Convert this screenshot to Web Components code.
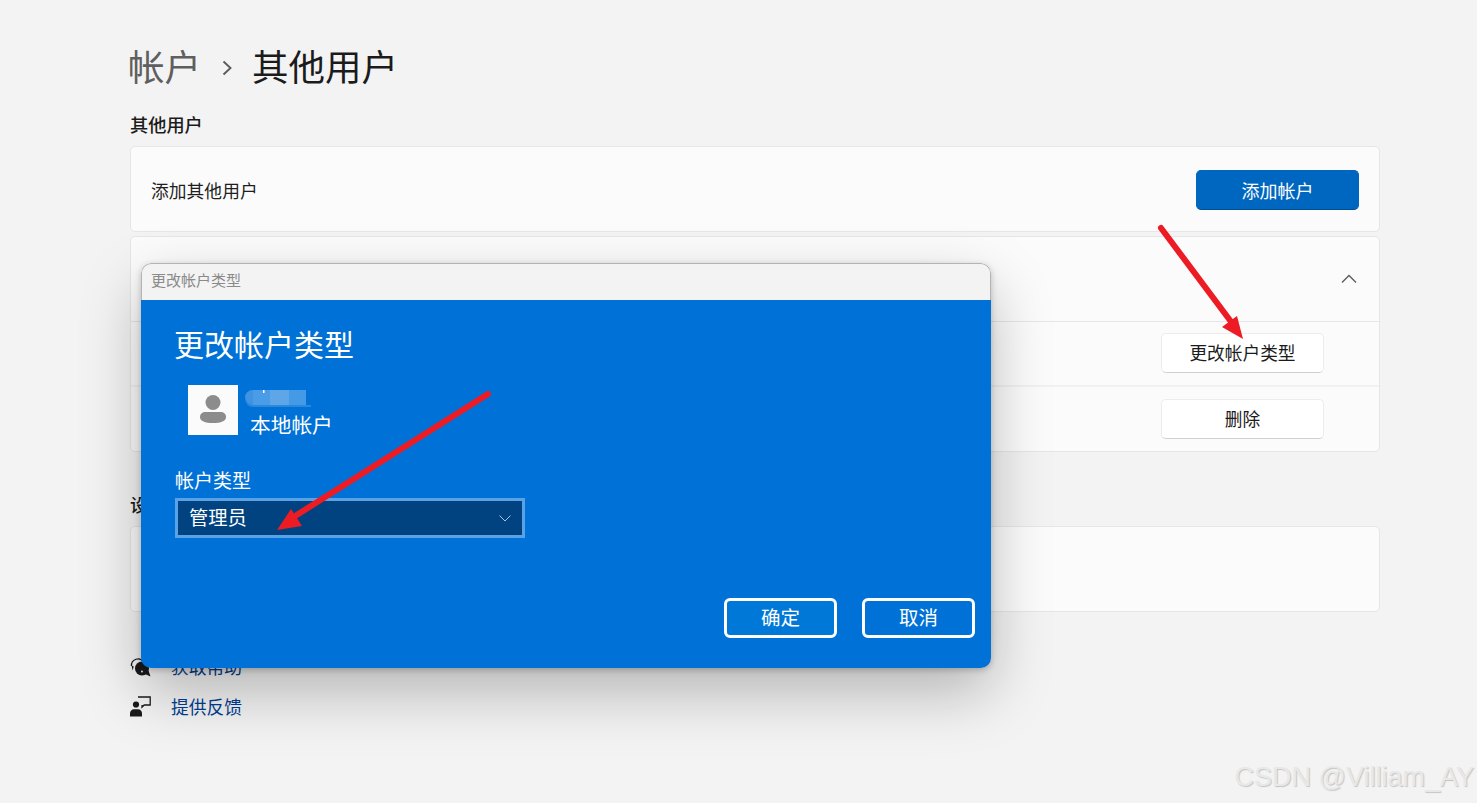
<!DOCTYPE html>
<html lang="zh-CN">
<head>
<meta charset="utf-8">
<title>其他用户</title>
<style>
    html, body { margin: 0; height: 100%; }
    body {
        background: #f3f3f3;
        color: #1b1b1b;
        font-family: "Noto Sans CJK SC", "Noto Sans", sans-serif;
        overflow: hidden;
    }
</style>
</head>
<body>
<settings-page>
    <page-crumb parent="帐户" current="其他用户"></page-crumb>
    <section-title>其他用户</section-title>
    <setting-card>
        <setting-row height="84" style="padding-top:2px">
            添加其他用户
            <win-button slot="action" kind="primary">添加帐户</win-button>
        </setting-row>
    </setting-card>
    <setting-card gap="4">
        <setting-row height="84">
            <chevron-up slot="action"></chevron-up>
        </setting-row>
        <setting-row height="64" line="1" style="padding-right:55px;padding-bottom:1px">
            <win-button slot="action">更改帐户类型</win-button>
        </setting-row>
        <setting-row height="66" line="2" style="padding-right:55px">
            <win-button slot="action">删除</win-button>
        </setting-row>
    </setting-card>
    <section-title top="39">设</section-title>
    <setting-card>
        <setting-row height="84"></setting-row>
    </setting-card>
    <help-links></help-links>
</settings-page>
<account-dialog></account-dialog>
<arrow-notes></arrow-notes>
<water-mark>CSDN @Villiam_AY</water-mark>

<script>
class SettingsPage extends HTMLElement {
    connectedCallback() {
        this.attachShadow({mode: 'open'}).innerHTML = `
        <style>
            :host {
                display: block;
                box-sizing: border-box;
                height: 803px;
                padding: 40px 97px 0 130px;
            }
        </style>
        <slot></slot>`;
    }
}

class PageCrumb extends HTMLElement {
    connectedCallback() {
        this.attachShadow({mode: 'open'}).innerHTML = `
        <style>
            :host {
                display: flex;
                align-items: center;
                height: 52px;
                font-size: 36.5px;
                line-height: 52px;
                margin-left: -2px;
            }
            .parent { color: #5f5f5f; }
            svg { margin: 3px 19px 0 21px; }
        </style>
        <span class="parent">${this.getAttribute('parent')}</span>
        <svg width="11" height="16" viewBox="0 0 11 16"><path d="M1.500 1.500L8.500 8l-7 6.500" fill="none" stroke="#5c5c5c" stroke-width="1.900"/></svg>
        <span>${this.getAttribute('current')}</span>`;
    }
}

class SectionTitle extends HTMLElement {
    connectedCallback() {
        const top = this.getAttribute('top') || 19;
        this.attachShadow({mode: 'open'}).innerHTML = `
        <style>
            :host {
                display: block;
                margin-top: ${top}px;
                margin-bottom: 9px;
                height: 26px;
                font-size: 18.2px;
                line-height: 26px;
                font-weight: 500;
            }
        </style>
        <slot></slot>`;
    }
}

class SettingCard extends HTMLElement {
    connectedCallback() {
        const gap = this.getAttribute('gap') || 0;
        this.attachShadow({mode: 'open'}).innerHTML = `
        <style>
            :host {
                display: block;
                margin-top: ${gap}px;
                background: #fbfbfb;
                border: 1px solid #e6e6e6;
                border-radius: 5px;
            }
        </style>
        <slot></slot>`;
    }
}

class SettingRow extends HTMLElement {
    connectedCallback() {
        const line = this.getAttribute('line');
        this.attachShadow({mode: 'open'}).innerHTML = `
        <style>
            :host {
                display: flex;
                align-items: center;
                justify-content: space-between;
                box-sizing: border-box;
                height: ${this.getAttribute('height')}px;
                padding: 0 20px;
                font-size: 17.8px;
                color: #1f1f1f;
                ${line ? `border-top: ${line}px solid ${line === '1' ? '#e6e6e6' : '#f1f1f1'};` : ''}
            }
        </style>
        <span><slot></slot></span>
        <slot name="action"></slot>`;
    }
}

class WinButton extends HTMLElement {
    connectedCallback() {
        const primary = this.getAttribute('kind') === 'primary';
        this.attachShadow({mode: 'open'}).innerHTML = `
        <style>
            :host {
                display: flex;
                align-items: center;
                justify-content: center;
                box-sizing: border-box;
                width: 163px;
                height: 40px;
                border-radius: 5px;
                font-size: ${primary ? '18px' : '17.7px'};
                padding-bottom: ${primary ? 0 : 2}px;
                border: 1px solid ${primary ? '#0067c0' : '#ececec'};
                border-bottom-color: ${primary ? '#004f93' : '#d0d0d0'};
                background: ${primary ? '#0067c0' : '#ffffff'};
                color: ${primary ? '#ffffff' : '#1b1b1b'};
            }
        </style>
        <slot></slot>`;
    }
}

class ChevronUp extends HTMLElement {
    connectedCallback() {
        this.attachShadow({mode: 'open'}).innerHTML = `
        <style>
            :host { display: block; width: 16px; height: 10px; margin-right: 2px; margin-bottom: 1px; }
            svg { display: block; }
        </style>
        <svg width="16" height="10" viewBox="0 0 16 10"><path d="M1 8.500l7-7 7 7" fill="none" stroke="#5a5a5a" stroke-width="1.300"/></svg>`;
    }
}

class HelpLinks extends HTMLElement {
    connectedCallback() {
        this.attachShadow({mode: 'open'}).innerHTML = `
        <style>
            :host {
                display: flex;
                flex-direction: column;
                gap: 10px;
                margin-top: 39px;
            }
            a {
                display: flex;
                align-items: center;
                gap: 20px;
                height: 30px;
                font-size: 17.8px;
                color: #003e92;
                text-decoration: none;
            }
            svg { flex: none; display: block; }
        </style>
        <a href="#help">
            <svg width="21" height="21" viewBox="0 0 21 21">
                <path d="M1.500 10a6.500 6.500 0 0 1 12-4" fill="none" stroke="#1a1a1a" stroke-width="1.300"/>
                <path d="M1.500 9.500l2.200 1-1 4z" fill="#1a1a1a"/>
                <circle cx="12" cy="12.500" r="7" fill="#1a1a1a"/>
                <path d="M15 18l5.500 2.500-2-6z" fill="#1a1a1a"/>
                <circle cx="12" cy="15.500" r=".9" fill="#fff"/>
            </svg>
            获取帮助
        </a>
        <a href="#feedback">
            <svg width="21" height="21" viewBox="0 0 21 21">
                <circle cx="6" cy="8.500" r="3.100" fill="#1a1a1a"/>
                <path d="M0 20.500v-3.300c0-2.200 1.800-4 4-4h4c2.200 0 4 1.800 4 4v3.300z" fill="#1a1a1a"/>
                <path d="M8 1h12.200v8h-6l-2.200 2.200V9" fill="none" stroke="#1a1a1a" stroke-width="1.300"/>
            </svg>
            提供反馈
        </a>`;
    }
}

class AccountDialog extends HTMLElement {
    connectedCallback() {
        this.attachShadow({mode: 'open'}).innerHTML = `
        <style>
            :host {
                position: absolute;
                left: 141px;
                top: 263px;
                width: 850px;
                height: 405px;
                display: flex;
                flex-direction: column;
                border-radius: 10px;
                overflow: hidden;
                box-shadow: 0 24px 60px rgba(0, 0, 0, .26), 0 2px 6px rgba(0, 0, 0, .22);
                color: #fff;
            }
            .bar {
                flex: none;
                box-sizing: border-box;
                height: 37px;
                line-height: 31px;
                padding-left: 9px;
                background: #f3f3f3;
                border: 1px solid #b4b4b4;
                border-bottom: 0;
                border-radius: 10px 10px 0 0;
                color: #8a8a8a;
                font-size: 15px;
            }
            .body {
                flex: 1;
                display: flex;
                flex-direction: column;
                padding: 21px 16px 30px 34px;
                background: #0071d6;
            }
            h1 {
                margin: 0 0 0 -1px;
                height: 44px;
                line-height: 44px;
                font-size: 30px;
                font-weight: 400;
            }
            .user {
                display: flex;
                gap: 7px;
                margin: 20px 0 0 13px;
            }
            .avatar {
                width: 50px;
                height: 50px;
                background: #fbfbfb;
                flex: none;
            }
            .avatar svg { display: block; }
            .who {
                display: flex;
                flex-direction: column;
            }
            .name {
                box-sizing: border-box;
                display: flex;
                width: 66px;
                height: 17px;
                margin-top: 5px;
                border-bottom: 2px solid #2b88dd;
                border-radius: 0 0 0 8px;
            }
            .name i { display: block; height: 100%; filter: blur(.6px); }
            .local {
                font-size: 20.700px;
                line-height: 28px;
                margin: 3px 0 0 5px;
            }
            .label {
                margin-top: 28px;
                height: 28px;
                line-height: 28px;
                font-size: 19px;
            }
            .select {
                box-sizing: border-box;
                display: flex;
                align-items: center;
                justify-content: space-between;
                width: 350px;
                height: 40px;
                margin-top: 4px;
                padding: 0 11px 3px 11px;
                border: 3px solid #5aa2e6;
                background: #004380;
                font-size: 19.300px;
            }
            .select svg { margin-top: 3px; }
            .actions {
                display: flex;
                justify-content: flex-end;
                gap: 25px;
                margin-top: auto;
            }
            .actions div {
                box-sizing: border-box;
                display: flex;
                align-items: center;
                justify-content: center;
                width: 113px;
                height: 40px;
                padding-bottom: 3px;
                border: 3px solid #fff;
                border-radius: 6px;
                font-size: 19.500px;
            }
            .actions .ok { background: #0078d7; }
        </style>
        <div class="bar">更改帐户类型</div>
        <div class="body">
            <h1>更改帐户类型</h1>
            <div class="user">
                <div class="avatar">
                    <svg width="50" height="50" viewBox="0 0 50 50">
                        <g fill="#8c8c8c" style="filter: blur(.7px)">
                            <circle cx="25" cy="17.500" r="7.500"/>
                            <path d="M18 27h14c4 0 6 2 6 5 0 4-5 6-13 6s-13-2-13-6c0-3 2-5 6-5z"/>
                        </g>
                    </svg>
                </div>
                <div class="who">
                    <div class="name" aria-hidden="true">
                        <i style="width:8px;background:#3f93e2;border-radius:8px 0 0 8px"></i>
                        <i style="width:17px;background:linear-gradient(#fff,#fff) 10px 0/1.500px 3px no-repeat,#4a9ce6"></i>
                        <i style="width:19px;background:#5ea6e8"></i>
                        <i style="width:17px;background:#459ae5"></i>
                    </div>
                    <div class="local">本地帐户</div>
                </div>
            </div>
            <div class="label">帐户类型</div>
            <div class="select">
                <span>管理员</span>
                <svg width="12" height="7" viewBox="0 0 12 7"><path d="M.5.500L6 6 11.500.500" fill="none" stroke="#a9c4de" stroke-width="1"/></svg>
            </div>
            <div class="actions">
                <div class="ok">确定</div>
                <div>取消</div>
            </div>
        </div>`;
    }
}

class ArrowNotes extends HTMLElement {
    connectedCallback() {
        this.attachShadow({mode: 'open'}).innerHTML = `
        <style>
            :host { position: absolute; left: 0; top: 0; pointer-events: none; }
            svg { display: block; }
        </style>
        <svg width="1477" height="803" viewBox="0 0 1477 803">
            <g stroke="#ed1c24" stroke-width="6" stroke-linecap="round" fill="none">
                <path d="M1161 228L1232 323"/>
                <path d="M488 394L292 518"/>
            </g>
            <path d="M1243 339L1222 327L1237 316Z" fill="#ed1c24"/>
            <path d="M277 530L291 509L302 526Z" fill="#ed1c24"/>
        </svg>`;
    }
}

class WaterMark extends HTMLElement {
    connectedCallback() {
        this.attachShadow({mode: 'open'}).innerHTML = `
        <style>
            :host {
                position: absolute;
                right: 3px;
                top: 759px;
                font-family: "Liberation Sans", sans-serif;
                font-size: 27px;
                line-height: 36px;
                color: #e8e8e8;
                text-shadow: 1px 1px 1px #c4c4c4;
                white-space: nowrap;
            }
        </style>
        <slot></slot>`;
    }
}

customElements.define("settings-page", SettingsPage);
customElements.define("page-crumb", PageCrumb);
customElements.define("section-title", SectionTitle);
customElements.define("setting-card", SettingCard);
customElements.define("setting-row", SettingRow);
customElements.define("win-button", WinButton);
customElements.define("chevron-up", ChevronUp);
customElements.define("help-links", HelpLinks);
customElements.define("account-dialog", AccountDialog);
customElements.define("arrow-notes", ArrowNotes);
customElements.define("water-mark", WaterMark);
</script>
</body>
</html>
